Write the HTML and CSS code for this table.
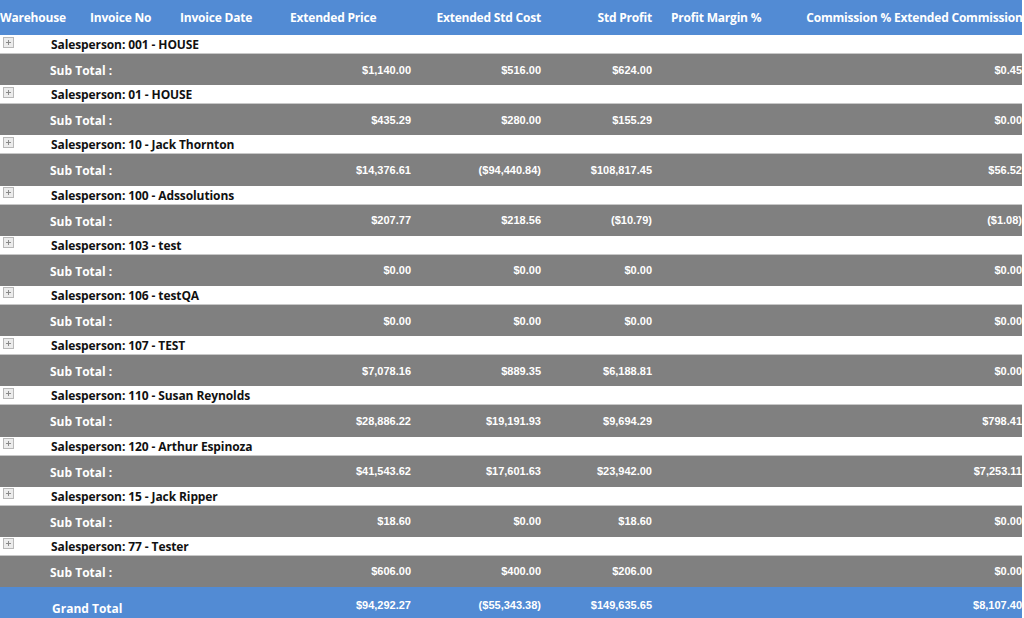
FILE: index.html
```html
<!DOCTYPE html>
<html>
<head>
<meta charset="utf-8">
<link rel="stylesheet" href="styles.css">
</head>
<body>
<div class="report">
  <div class="row head">
    <div class="c1 hl">Warehouse</div>
    <div class="c2 hl">Invoice No</div>
    <div class="c3 hl">Invoice Date</div>
    <div class="c4 hl">Extended Price</div>
    <div class="c5 hr">Extended Std Cost</div>
    <div class="c6 hr">Std Profit</div>
    <div class="c7 hl">Profit Margin %</div>
    <div class="c8 hr">Commission %</div>
    <div class="c9 hl">Extended Commission</div>
  </div>

  <div class="group"><span class="exp"></span><span class="name">Salesperson: 001 - HOUSE</span></div>
  <div class="row sub"><div class="lbl">Sub Total :</div><div class="c4 v">$1,140.00</div><div class="c5 v">$516.00</div><div class="c6 v">$624.00</div><div class="c7"></div><div class="c8"></div><div class="c9 v">$0.45</div></div>

  <div class="group"><span class="exp"></span><span class="name">Salesperson: 01 - HOUSE</span></div>
  <div class="row sub"><div class="lbl">Sub Total :</div><div class="c4 v">$435.29</div><div class="c5 v">$280.00</div><div class="c6 v">$155.29</div><div class="c7"></div><div class="c8"></div><div class="c9 v">$0.00</div></div>

  <div class="group"><span class="exp"></span><span class="name">Salesperson: 10 - Jack Thornton</span></div>
  <div class="row sub"><div class="lbl">Sub Total :</div><div class="c4 v">$14,376.61</div><div class="c5 v">($94,440.84)</div><div class="c6 v">$108,817.45</div><div class="c7"></div><div class="c8"></div><div class="c9 v">$56.52</div></div>

  <div class="group"><span class="exp"></span><span class="name">Salesperson: 100 - Adssolutions</span></div>
  <div class="row sub"><div class="lbl">Sub Total :</div><div class="c4 v">$207.77</div><div class="c5 v">$218.56</div><div class="c6 v">($10.79)</div><div class="c7"></div><div class="c8"></div><div class="c9 v">($1.08)</div></div>

  <div class="group"><span class="exp"></span><span class="name">Salesperson: 103 - test</span></div>
  <div class="row sub"><div class="lbl">Sub Total :</div><div class="c4 v">$0.00</div><div class="c5 v">$0.00</div><div class="c6 v">$0.00</div><div class="c7"></div><div class="c8"></div><div class="c9 v">$0.00</div></div>

  <div class="group"><span class="exp"></span><span class="name">Salesperson: 106 - testQA</span></div>
  <div class="row sub"><div class="lbl">Sub Total :</div><div class="c4 v">$0.00</div><div class="c5 v">$0.00</div><div class="c6 v">$0.00</div><div class="c7"></div><div class="c8"></div><div class="c9 v">$0.00</div></div>

  <div class="group"><span class="exp"></span><span class="name">Salesperson: 107 - TEST</span></div>
  <div class="row sub"><div class="lbl">Sub Total :</div><div class="c4 v">$7,078.16</div><div class="c5 v">$889.35</div><div class="c6 v">$6,188.81</div><div class="c7"></div><div class="c8"></div><div class="c9 v">$0.00</div></div>

  <div class="group"><span class="exp"></span><span class="name">Salesperson: 110 - Susan Reynolds</span></div>
  <div class="row sub"><div class="lbl">Sub Total :</div><div class="c4 v">$28,886.22</div><div class="c5 v">$19,191.93</div><div class="c6 v">$9,694.29</div><div class="c7"></div><div class="c8"></div><div class="c9 v">$798.41</div></div>

  <div class="group"><span class="exp"></span><span class="name">Salesperson: 120 - Arthur Espinoza</span></div>
  <div class="row sub"><div class="lbl">Sub Total :</div><div class="c4 v">$41,543.62</div><div class="c5 v">$17,601.63</div><div class="c6 v">$23,942.00</div><div class="c7"></div><div class="c8"></div><div class="c9 v">$7,253.11</div></div>

  <div class="group"><span class="exp"></span><span class="name">Salesperson: 15 - Jack Ripper</span></div>
  <div class="row sub"><div class="lbl">Sub Total :</div><div class="c4 v">$18.60</div><div class="c5 v">$0.00</div><div class="c6 v">$18.60</div><div class="c7"></div><div class="c8"></div><div class="c9 v">$0.00</div></div>

  <div class="group"><span class="exp"></span><span class="name">Salesperson: 77 - Tester</span></div>
  <div class="row sub"><div class="lbl">Sub Total :</div><div class="c4 v">$606.00</div><div class="c5 v">$400.00</div><div class="c6 v">$206.00</div><div class="c7"></div><div class="c8"></div><div class="c9 v">$0.00</div></div>

  <div class="row grand"><div class="lbl glbl">Grand Total</div><div class="c4 v">$94,292.27</div><div class="c5 v">($55,343.38)</div><div class="c6 v">$149,635.65</div><div class="c7"></div><div class="c8"></div><div class="c9 v">$8,107.40</div></div>
</div>
</body>
</html>
```
FILE: styles.css
```css
html, body {
  margin: 0;
  padding: 0;
  background: #ffffff;
}
body {
  width: 1024px;
  height: 618px;
  overflow: hidden;
}
.report {
  width: 1022px;
}
.row {
  display: grid;
  grid-template-columns: 80px 90px 110px 135px 130px 111px 144px 93px 129px;
  align-items: center;
}
.head {
  height: 35px;
  background: #528bd4;
  color: #ffffff;
  font-family: "Open Sans", "Noto Sans", sans-serif;
  font-weight: 700;
  font-size: 12px;
  letter-spacing: -0.2px;
  white-space: nowrap;
}
.hl { text-align: left; }
.hr { text-align: right; }
.head .c1 { padding-left: 0; }
.head .c2 { padding-left: 10px; }
.head .c3 { padding-left: 10px; }
.head .c4 { padding-left: 10px; }
.head .c5 { padding-right: 4px; }
.head .c6 { padding-right: 4px; }
.head .c7 { padding-left: 15px; }
.head .c8 { padding-right: 2px; }
.head .c9 { padding-left: 1px; }

.group {
  height: 18px;
  display: flex;
  align-items: center;
  font-family: "Open Sans", "Noto Sans", sans-serif;
  font-weight: 700;
  font-size: 12px;
  letter-spacing: -0.1px;
  color: #111111;
  padding-top: 1px;
  box-sizing: border-box;
}
.exp {
  width: 9px;
  height: 9px;
  margin-left: 3px;
  margin-top: -5px;
  border: 1px solid #b8b8b8;
  background: #ececec;
  position: relative;
  box-sizing: content-box;
}
.exp::before, .exp::after {
  content: "";
  position: absolute;
  background: #8a8a8a;
}
.exp::before {
  left: 2px; top: 4px; width: 5px; height: 1px;
}
.exp::after {
  left: 4px; top: 2px; width: 1px; height: 5px;
}
.name {
  margin-left: 37px;
}
.sub {
  height: 31.2px;
  background: #808080;
  border-top: 1px solid #c8c8c8;
  color: #ffffff;
}
.lbl {
  grid-column: 1 / 4;
  padding-left: 50px;
  font-family: "Open Sans", "Noto Sans", sans-serif;
  font-weight: 700;
  font-size: 12px;
  padding-top: 2px;
}
.v {
  text-align: right;
  font-family: "Liberation Sans", Arial, sans-serif;
  font-weight: 700;
  font-size: 11px;
  padding-top: 0;
}
.c4.v { padding-right: 4px; }
.c5.v { padding-right: 4px; }
.c6.v { padding-right: 4px; }
.c9.v { padding-right: 0; }
.grand {
  height: 31px;
  background: #528bd4;
  color: #ffffff;
}
.glbl {
  padding-left: 52px;
  padding-top: 12px;
  font-size: 12px;
}
.grand .v {
  padding-top: 4px;
}
```
